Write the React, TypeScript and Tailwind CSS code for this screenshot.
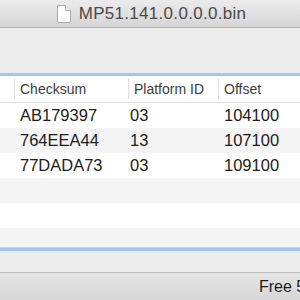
import React from "react";

const rows = [
  { sum: "AB179397", pid: "03", off: "104100" },
  { sum: "764EEA44", pid: "13", off: "107100" },
  { sum: "77DADA73", pid: "03", off: "109100" },
];

function FileIcon() {
  return (
    <svg width="15" height="18" viewBox="0 0 15 18" className="shrink-0">
      <path d="M1.5 0.5 H9.5 L14.5 5.5 V17.5 H1.5 Z" fill="#fff" stroke="#a8a8a8" />
      <path d="M9.5 0.5 V5.5 H14.5" fill="#f2f2f2" stroke="#a8a8a8" />
    </svg>
  );
}

export default function App() {
  return (
    <div className="w-[300px] h-[300px] overflow-hidden flex flex-col bg-white font-['Liberation_Sans',Arial,sans-serif]">
      {/* title bar */}
      <div className="h-[28px] shrink-0 flex items-center justify-center gap-[8px] bg-gradient-to-b from-[#ebebeb] to-[#d5d5d5] border-b border-[#b4b4b4] pl-[2px]">
        <FileIcon />
        <span className="text-[17px] leading-none text-[#4a4a4a] tracking-[0.3px]">MP51.141.0.0.0.0.bin</span>
      </div>

      {/* toolbar */}
      <div className="h-[45px] shrink-0 bg-[#ececec]" />
      <div className="h-[3px] shrink-0 bg-[#a3c6ee]" />

      {/* table header */}
      <div className="h-[27px] shrink-0 flex items-center border-b border-[#dedede] text-[14px] text-[#3c3c3c]">
        <div className="w-[15px] h-[20px] border-r border-[#dcdcdc]" />
        <div className="w-[114px] h-[20px] flex items-center pl-[5px] border-r border-[#dcdcdc]">Checksum</div>
        <div className="w-[90px] h-[20px] flex items-center pl-[5px] border-r border-[#dcdcdc]">Platform ID</div>
        <div className="flex-1 h-[20px] flex items-center pl-[5px]">Offset</div>
      </div>

      {/* rows */}
      <div className="flex-1 flex flex-col overflow-hidden text-[16.5px] text-[#1c1c1c]">
        {rows.map((r, i) => (
          <div key={r.sum} className={`h-[25px] shrink-0 flex items-center ${i % 2 ? "bg-[#f4f4f4]" : "bg-white"}`}>
            <div className="w-[15px]" />
            <div className="w-[114px] pl-[5px]">{r.sum}</div>
            <div className="w-[90px] pl-[1px]">{r.pid}</div>
            <div className="flex-1 pl-[5px]">{r.off}</div>
          </div>
        ))}
        <div className="h-[25px] shrink-0 bg-[#f4f4f4]" />
        <div className="h-[25px] shrink-0 bg-white" />
        <div className="flex-1 bg-[#f4f4f4]" />
      </div>

      {/* lower pane */}
      <div className="h-[1px] shrink-0 bg-[#cfcfcf]" />
      <div className="h-[3px] shrink-0 bg-[#a3c6ee]" />
      <div className="h-[22px] shrink-0 bg-[#ececec] border-b border-[#bcbcbc]" />

      {/* status bar */}
      <div className="h-[27px] shrink-0 flex items-center bg-gradient-to-b from-[#e6e6e6] to-[#d6d6d6] overflow-hidden">
        <span className="ml-[259px] text-[16px] text-[#1c1c1c] whitespace-nowrap">Free 5.21 GB</span>
      </div>
    </div>
  );
}
